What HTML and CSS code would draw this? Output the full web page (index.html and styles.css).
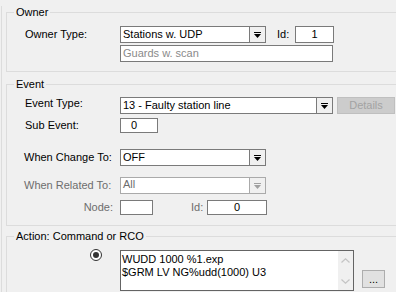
FILE: index.html
```html
<!DOCTYPE html>
<html lang="en">
<head>
    <meta charset="UTF-8">
    <title>Event Action</title>
    <link rel="stylesheet" href="styles.css">
</head>
<body>
    <div class="frame">
        <!-- Owner -->
        <fieldset class="group group-owner">
            <legend>Owner</legend>
            <div class="row row-owner">
                <span class="lbl">Owner Type:</span>
                <div class="combo w146">
                    <span class="val">Stations w. UDP</span>
                    <span class="drop"><svg width="7" height="6" viewBox="0 0 7 6"><rect x="0" y="0" width="7" height="1" fill="#000"/><polygon points="0,2 7,2 3.5,6" fill="#000"/></svg></span>
                </div>
                <span class="id-lbl">Id:</span>
                <div class="field w39 center">1</div>
            </div>
            <div class="row row-guards">
                <span class="lbl"></span>
                <div class="field w213 ghost">Guards w. scan</div>
            </div>
        </fieldset>

        <!-- Event -->
        <fieldset class="group group-event">
            <legend>Event</legend>
            <div class="row row-type">
                <span class="lbl">Event Type:</span>
                <div class="combo w213">
                    <span class="val">13 - Faulty station line</span>
                    <span class="drop"><svg width="7" height="6" viewBox="0 0 7 6"><rect x="0" y="0" width="7" height="1" fill="#000"/><polygon points="0,2 7,2 3.5,6" fill="#000"/></svg></span>
                </div>
                <button class="btn btn-off">Details</button>
            </div>
            <div class="row row-sub">
                <span class="lbl">Sub Event:</span>
                <div class="field small w38 pad0">0</div>
            </div>
            <div class="row row-change">
                <span class="lbl lbl-tight">When Change To:</span>
                <div class="combo w146">
                    <span class="val">OFF</span>
                    <span class="drop"><svg width="7" height="6" viewBox="0 0 7 6"><rect x="0" y="0" width="7" height="1" fill="#000"/><polygon points="0,2 7,2 3.5,6" fill="#000"/></svg></span>
                </div>
            </div>
            <div class="row row-related">
                <span class="lbl lbl-tight off">When Related To:</span>
                <div class="combo combo-off small w146">
                    <span class="val">All</span>
                    <span class="drop"><svg width="7" height="6" viewBox="0 0 7 6"><rect x="0" y="0" width="7" height="1" fill="#a0a0a0"/><polygon points="0,2 7,2 3.5,6" fill="#a0a0a0"/></svg></span>
                </div>
            </div>
            <div class="row row-node">
                <span class="lbl lbl-right off">Node:</span>
                <div class="field small w33"></div>
                <span class="id-lbl id-node off">Id:</span>
                <div class="field small w60 center">0</div>
            </div>
        </fieldset>

        <!-- Action -->
        <fieldset class="group group-action">
            <legend>Action: Command or RCO</legend>
            <div class="row row-action">
                <span class="radio"><span class="dot"></span></span>
                <div class="memo">
                    <div class="memo-text">WUDD 1000 %1.exp<br>$GRM LV NG%udd(1000) U3</div>
                    <div class="memo-scroll">
                        <svg width="9" height="5" viewBox="0 0 9 5"><polyline points="0.5,4.5 4.5,0.8 8.5,4.5" fill="none" stroke="#c4c4c4" stroke-width="1.2"/></svg>
                        <svg width="9" height="5" viewBox="0 0 9 5"><polyline points="0.5,0.5 4.5,4.2 8.5,0.5" fill="none" stroke="#c4c4c4" stroke-width="1.2"/></svg>
                    </div>
                </div>
                <button class="btn btn-more">...</button>
            </div>
        </fieldset>
        <div class="edge-btn"></div>
    </div>
</body>
</html>
```

FILE: styles.css
```css
html, body {
    margin: 0;
    height: 100%;
    overflow: hidden;
}
body {
    background: #f0f0f0;
    font-family: 'Liberation Sans', Arial, sans-serif;
    font-size: 11px;
    line-height: 13px;
    color: #000;
}
.frame {
    margin-left: 1px;
    border-left: 1px solid #dcdcdc;
    height: 100%;
}
.group {
    margin: 0 0 0 4px;
    padding: 0 0 0 7px;
    border: 1px solid #dcdcdc;
    border-right: none;
    min-width: 0;
}
.group legend {
    padding: 0 2px;
    line-height: 13px;
    height: 13px;
}
.group-owner {
    margin-top: 6px;
    padding-bottom: 9px;
}
.group-event {
    margin-top: 6px;
    padding-bottom: 10px;
}
.group-action {
    margin-top: 4px;
    padding-bottom: 2px;
}
.row {
    display: flex;
    align-items: center;
    padding-left: 11px;
}
.row-owner { margin-top: 7px; }
.row-guards { margin-top: 2px; }
.row-type { margin-top: 6px; align-items: flex-start; }
.row-sub { margin-top: 4px; }
.row-change { margin-top: 16px; }
.row-related { margin-top: 11px; }
.row-node { margin-top: 6px; }
.row-action { margin-top: 6px; align-items: flex-start; }

.lbl {
    width: 95px;
    flex: none;
}
.lbl-tight { margin-left: -1px; width: 96px; }
.lbl-right {
    text-align: right;
    padding-right: 7px;
    width: 88px;
}
.off { color: #6d6d6d; }

.field, .combo {
    box-sizing: border-box;
    height: 17px;
    border: 1px solid #7a7a7a;
    background: #fff;
    flex: none;
}
.field {
    padding: 1px 2px 0;
    line-height: 13px;
}
.small { height: 15px; }
.small.field { padding-top: 0; }
.center { text-align: center; }
.pad0 { padding-left: 10px; }
.ghost { color: #8a8a8a; }

.combo {
    display: flex;
    height: 17px;
}
.combo .val {
    flex: 1;
    padding: 1px 2px 0;
}
.combo .drop {
    width: 15px;
    border-left: 1px solid #7a7a7a;
    background: #f0f0f0;
    display: flex;
    align-items: center;
    justify-content: center;
}
.combo-off {
    border-color: #aaaaaa;
    color: #6d6d6d;
}
.combo-off .val { padding-top: 0; }
.combo-off .drop { border-left-color: #aaaaaa; }

.w33 { width: 33px; }
.w38 { width: 38px; }
.w39 { width: 39px; }
.w60 { width: 60px; }
.w146 { width: 146px; }
.w213 { width: 213px; }

.id-lbl {
    margin-left: 11px;
    width: 18px;
}
.id-node {
    margin-left: 38px;
    width: 16px;
}

.btn {
    font: inherit;
    box-sizing: border-box;
    margin: 0;
    padding: 0;
    flex: none;
}
.btn-off {
    margin-left: 4px;
    width: 58px;
    height: 17px;
    background: #cccccc;
    border: 1px solid #bfbfbf;
    color: #a3a3a3;
}
.btn-more {
    margin: 21px 0 0 8px;
    width: 23px;
    height: 18px;
    background: #e1e1e1;
    border: 1px solid #adadad;
    color: #000;
}

.radio {
    box-sizing: border-box;
    width: 12px;
    height: 12px;
    margin: 0 18px 0 65px;
    border: 1px solid #333;
    border-radius: 50%;
    background: #fff;
    display: flex;
    align-items: center;
    justify-content: center;
    flex: none;
}
.radio .dot {
    width: 6px;
    height: 6px;
    border-radius: 50%;
    background: #333;
}

.memo {
    box-sizing: border-box;
    margin-top: 1px;
    width: 234px;
    height: 41px;
    border: 1px solid #646464;
    background: #fff;
    display: flex;
    flex: none;
}
.memo-text {
    flex: 1;
    padding: 2px 1px 0;
}
.memo-scroll {
    width: 15px;
    background: #f0f0f0;
    display: flex;
    flex-direction: column;
    align-items: center;
    justify-content: space-between;
    padding: 7px 0 6px;
    box-sizing: border-box;
}

.edge-btn {
    margin: 1px 0 0 253px;
    width: 58px;
    height: 4px;
    border-top: 1px solid #c8c8c8;
    background: #e1e1e1;
}
```
